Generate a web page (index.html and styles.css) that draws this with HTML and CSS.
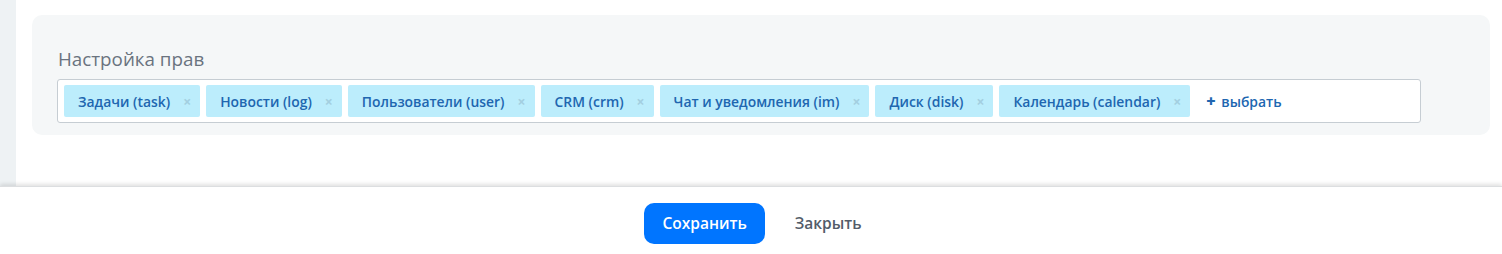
FILE: index.html
```html
<!DOCTYPE html>
<html lang="ru">
<head>
  <meta charset="UTF-8" />
  <title>Настройка прав</title>
  <link rel="stylesheet" href="styles.css">
</head>
<body>
  <div class="page">
    <div class="sidebar"></div>
    <div class="content">
      <div class="card">
        <div class="field-label">Настройка прав</div>
        <div class="tag-box">
          <span class="tag">Задачи (task)<span class="tag-remove">×</span></span>
          <span class="tag">Новости (log)<span class="tag-remove">×</span></span>
          <span class="tag">Пользователи (user)<span class="tag-remove">×</span></span>
          <span class="tag">CRM (crm)<span class="tag-remove">×</span></span>
          <span class="tag">Чат и уведомления (im)<span class="tag-remove">×</span></span>
          <span class="tag">Диск (disk)<span class="tag-remove">×</span></span>
          <span class="tag">Календарь (calendar)<span class="tag-remove">×</span></span>
          <span class="tag-add"><b>+</b> выбрать</span>
        </div>
      </div>
    </div>
  </div>

  <footer class="buttons">
    <button class="btn btn-save">Сохранить</button>
    <button class="btn btn-close">Закрыть</button>
  </footer>
</body>
</html>
```

FILE: styles.css
```css
* {
  box-sizing: border-box;
  margin: 0;
  padding: 0;
}

body {
  font-family: 'Open Sans', 'Noto Sans', sans-serif;
  background-color: white;
  width: 1502px;
  height: 254px;
  overflow: hidden;
  display: flex;
  flex-direction: column;
}

.page {
  display: flex;
  height: 186px;
}

.sidebar {
  width: 16px;
  background-color: #eef2f4;
}

.content {
  flex: 1;
  padding: 15px 12px 0 16px;
}

.card {
  background-color: #f5f7f8;
  border-radius: 10px;
  padding: 33px 69px 12px 25px;
}

.field-label {
  font-size: 18.8px;
  line-height: 22px;
  color: #6a737f;
  padding-left: 1px;
  margin-bottom: 9px;
}

.tag-box {
  display: flex;
  align-items: center;
  gap: 6px;
  background-color: white;
  border: 1px solid #c6cdd3;
  border-radius: 3px;
  padding: 5px 6px;
}

.tag {
  display: flex;
  align-items: center;
  height: 32px;
  padding: 0 9px 0 14px;
  background-color: #bcedfc;
  border-radius: 2px;
  color: #2066b0;
  font-size: 13.9px;
  font-weight: 600;
  white-space: nowrap;
}

.tag-remove {
  margin-left: 13px;
  color: #a3cfe0;
  font-size: 14px;
  font-weight: 700;
}

.tag-add {
  margin-left: 10px;
  color: #2066b0;
  font-size: 13.9px;
  font-weight: 600;
}

.tag-add b {
  font-size: 16px;
  font-weight: 800;
  margin-right: 2px;
}

.buttons {
  flex: 1;
  display: flex;
  justify-content: center;
  align-items: center;
  padding-top: 5px;
  padding-left: 4px;
  box-shadow: 0 -2px 4px rgba(0, 0, 0, 0.12);
  border-top: 1px solid #dcdee0;
  position: relative;
}

.btn {
  border: none;
  font-family: inherit;
  font-size: 15.5px;
  font-weight: 600;
  cursor: pointer;
  height: 41px;
  border-radius: 10px;
}

.btn-save {
  background-color: #0075ff;
  color: white;
  padding: 0 18px;
}

.btn-close {
  background: none;
  color: #535c69;
  padding: 0;
  margin-left: 30px;
}
```
